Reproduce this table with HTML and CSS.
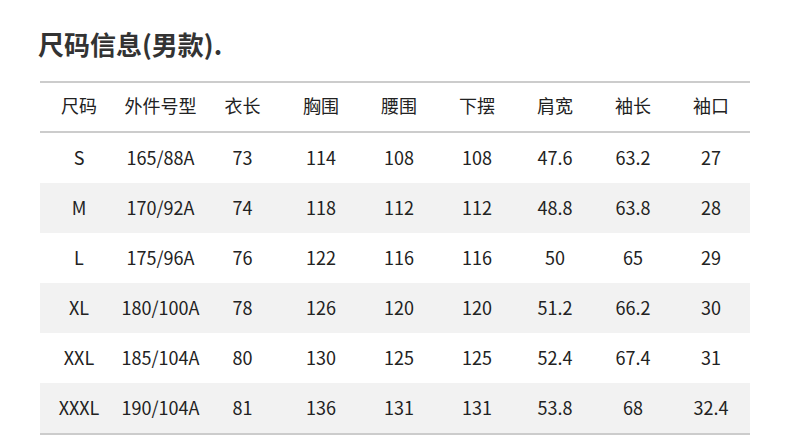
FILE: index.html
```html
<!DOCTYPE html>
<html lang="zh-CN">
<head>
<meta charset="utf-8">
<link rel="stylesheet" href="styles.css">
</head>
<body>
<div class="page">
  <h1 class="title">尺码信息(男款).</h1>
  <table class="size-table">
    <colgroup>
      <col class="col-size">
      <col class="col-type">
      <col class="col-len">
      <col class="col-std"><col class="col-std"><col class="col-std"><col class="col-std"><col class="col-std"><col class="col-std">
    </colgroup>
    <thead>
      <tr><th>尺码</th><th>外件号型</th><th>衣长</th><th>胸围</th><th>腰围</th><th>下摆</th><th>肩宽</th><th>袖长</th><th>袖口</th></tr>
    </thead>
    <tbody>
      <tr><td>S</td><td>165/88A</td><td>73</td><td>114</td><td>108</td><td>108</td><td>47.6</td><td>63.2</td><td>27</td></tr>
      <tr><td>M</td><td>170/92A</td><td>74</td><td>118</td><td>112</td><td>112</td><td>48.8</td><td>63.8</td><td>28</td></tr>
      <tr><td>L</td><td>175/96A</td><td>76</td><td>122</td><td>116</td><td>116</td><td>50</td><td>65</td><td>29</td></tr>
      <tr><td>XL</td><td>180/100A</td><td>78</td><td>126</td><td>120</td><td>120</td><td>51.2</td><td>66.2</td><td>30</td></tr>
      <tr><td>XXL</td><td>185/104A</td><td>80</td><td>130</td><td>125</td><td>125</td><td>52.4</td><td>67.4</td><td>31</td></tr>
      <tr><td>XXXL</td><td>190/104A</td><td>81</td><td>136</td><td>131</td><td>131</td><td>53.8</td><td>68</td><td>32.4</td></tr>
    </tbody>
  </table>
</div>
</body>
</html>
```
FILE: styles.css
```css
html, body {
  margin: 0;
  padding: 0;
  background: #ffffff;
}
body {
  font-family: "Noto Sans CJK SC", "Noto Sans", sans-serif;
  color: #222222;
}
.page {
  padding: 22px 40px 0 40px;
}
.title {
  margin: 0 0 0 -2px;
  font-size: 26px;
  font-weight: 700;
  line-height: 44px;
  height: 59px;
  color: #333333;
}
.size-table {
  width: 710px;
  border-collapse: collapse;
  table-layout: fixed;
  border-top: 2px solid #cccccc;
  border-bottom: 2px solid #cccccc;
}
.col-size { width: 78px; }
.col-type { width: 85px; }
.col-len { width: 79px; }
.col-std { width: 78px; }
.size-table th,
.size-table td {
  text-align: center;
  padding: 0;
  font-size: 18px;
  font-weight: 400;
  color: #222222;
}
.size-table th {
  height: 44px;
  padding-bottom: 4px;
  border-bottom: 2px solid #cccccc;
}
.size-table td {
  height: 47px;
  padding-bottom: 3px;
}
.size-table tbody tr:nth-child(even) td {
  background: #f2f2f2;
}
```
